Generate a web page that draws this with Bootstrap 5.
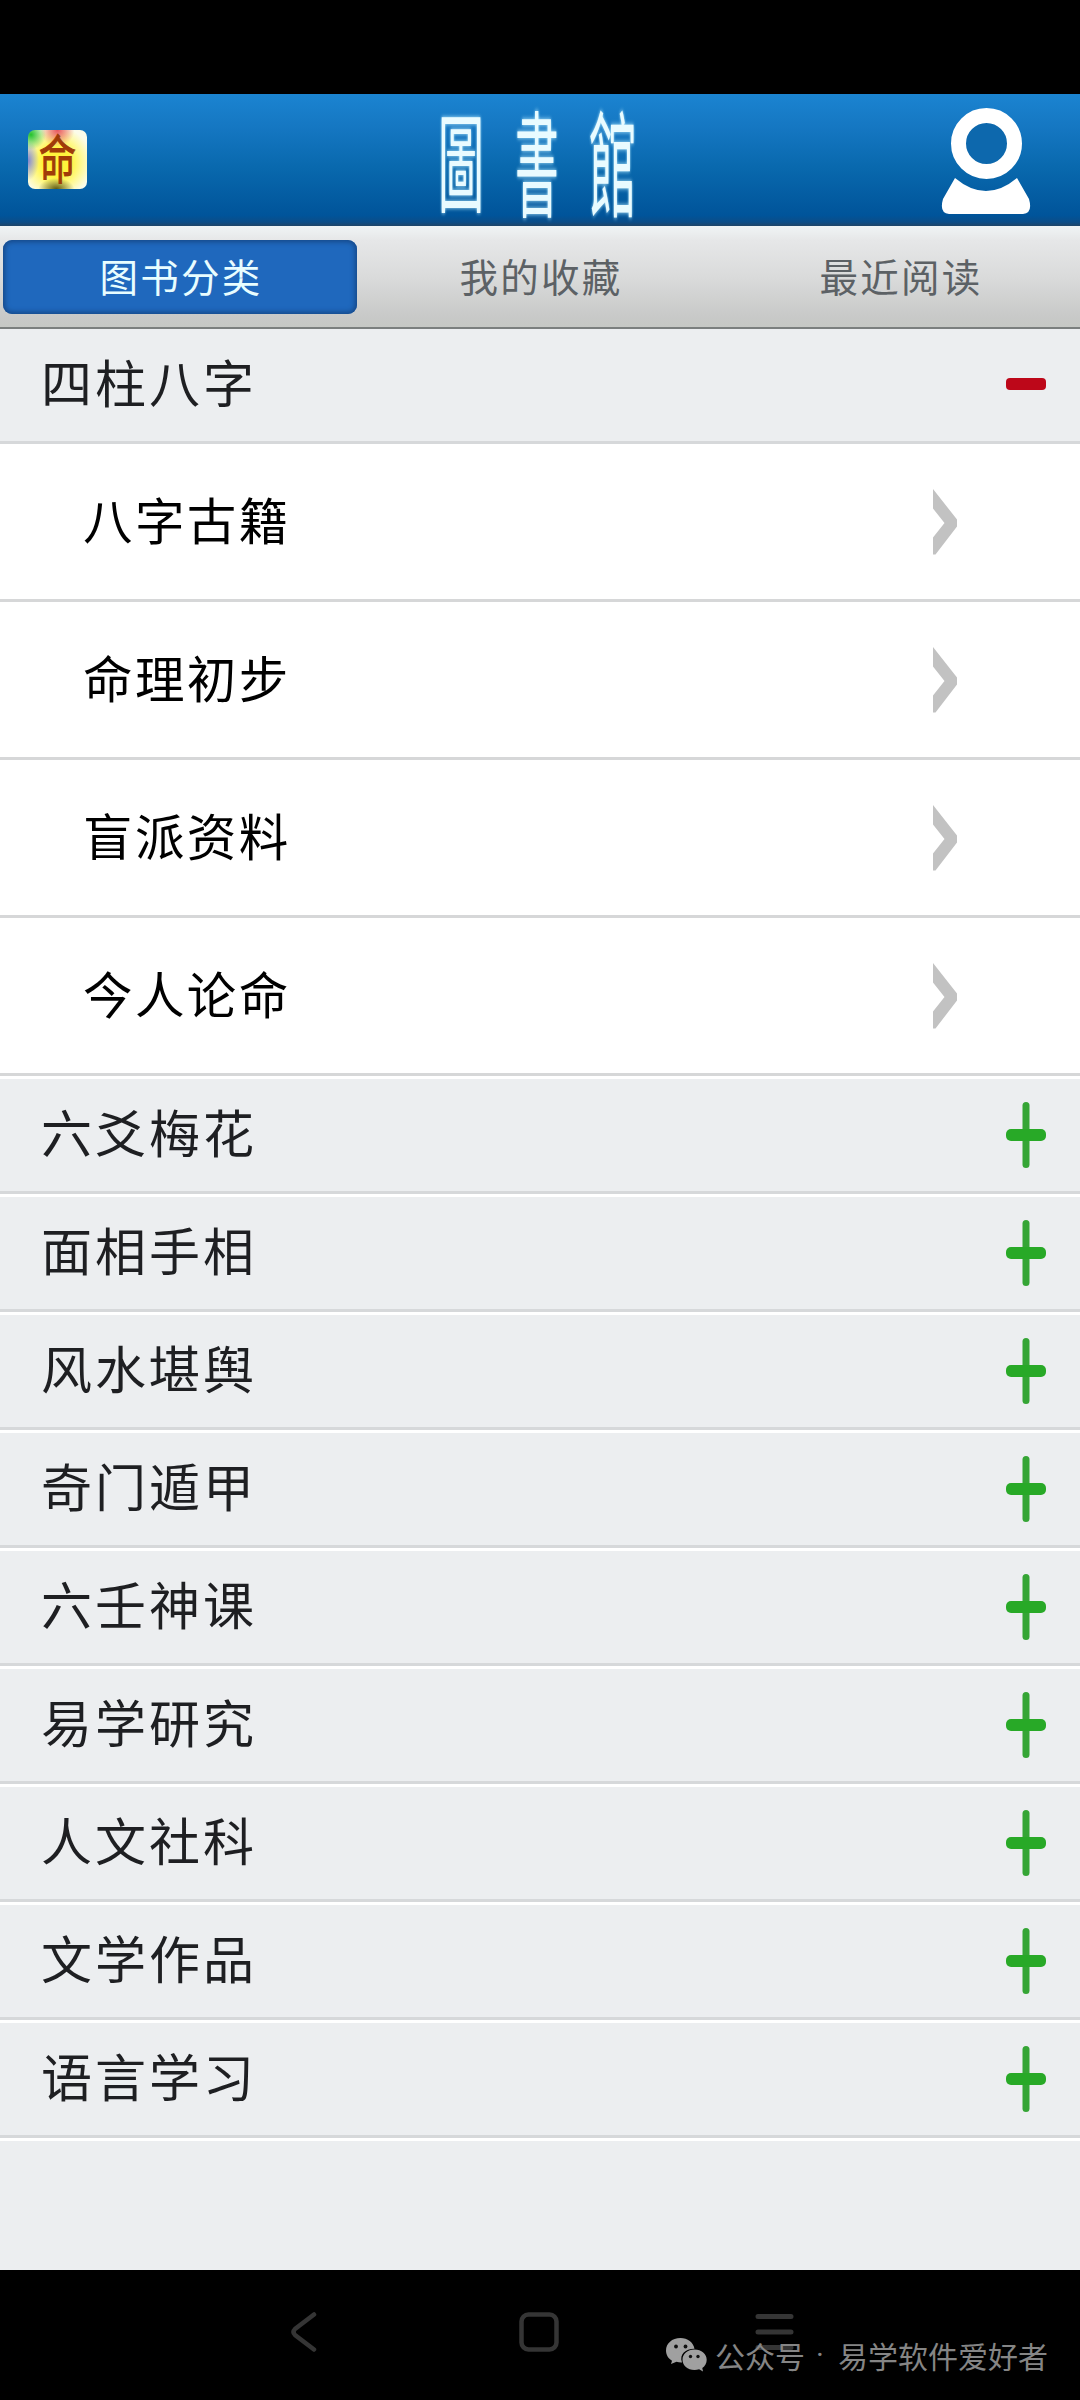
<!DOCTYPE html>
<html lang="zh-CN">
<head>
    <meta charset="UTF-8">
    <meta name="viewport" content="width=device-width, initial-scale=1.0">
    <title>圖書館</title>
    <link href="https://cdn.jsdelivr.net/npm/bootstrap@5.3.0/dist/css/bootstrap.min.css" rel="stylesheet">
    <style>
        body {
            font-family: "Noto Sans CJK SC", sans-serif;
            background: #eceef0;
            color: #1e1f22;
            line-height: 1;
            min-height: 2400px;
        }
        .status-bar {
            height: 94px;
            background: #000;
        }
        .top-bar {
            height: 132px;
            padding: 0 49px 0 28px;
            background: linear-gradient(#1b84d1 0%, #1577c2 25%, #0969ae 55%, #00549a 92%, #0b4d88 97%, #1f4568 100%);
        }
        .app-logo {
            width: 59px;
            height: 59px;
            margin-top: -1px;
            border-radius: 7px;
            overflow: visible;
            background:
                radial-gradient(circle at 5% 8%, #22c22a 0, transparent 15px),
                radial-gradient(circle at 50% 0%, #e85560 0, transparent 17px),
                radial-gradient(ellipse 11px 20px at 0% 52%, #7f86d0 0, transparent 100%),
                radial-gradient(ellipse 18px 11px at 48% 100%, #5f5a10 0, transparent 100%),
                radial-gradient(circle at 48% 55%, #fff43c 0 14px, #fff98a 24px, #fbfcea 36px);
        }
        .app-logo text {
            font-size: 37px;
            fill: #a03c08;
            stroke: #a03c08;
            stroke-width: .7px;
        }
        .brand-title {
            width: 220px;
            height: 132px;
            margin-left: 48px;
            overflow: visible;
        }
        .brand-title text {
            font-family: "Noto Sans CJK TC", sans-serif;
            font-size: 46px;
            fill: #e9fbff;
            filter: drop-shadow(0 0 1px #b9ecff);
        }
        .tab-strip {
            height: 103px;
            padding: 14px 3px 15px;
            background: linear-gradient(#f0f4f5 0%, #e6e7e8 14%, #dadbdb 50%, #c8c9c8 90%, #c6c8c4 100%);
            border-bottom: 2px solid #7b7f7e;
        }
        .tab-strip .nav-link {
            width: 354px;
            height: 74px;
            padding: 0 0 4px 2px;
            font-size: 38.5px;
            letter-spacing: 2.3px;
            color: #5c6165;
            border-radius: 9px;
        }
        .tab-strip .nav-link.active {
            color: #e8fdff;
            background: #1f68bd;
            box-shadow: inset 0 0 5px 2px #164888;
        }
        .group-row {
            height: 118px;
            padding: 0 34px 4px 41px;
            font-size: 51px;
            letter-spacing: 3px;
            border-top: 3px solid #fff;
            box-shadow: inset 0 -3px 0 #d6d8da;
        }
        .group-row.open {
            height: 115px;
            border-top: 0;
            padding-bottom: 5px;
        }
        .group-row span {
            margin-top: -6px;
        }
        .sub-row {
            height: 158px;
            padding: 0 122px 0 83px;
            font-size: 49.5px;
            letter-spacing: 2.4px;
            color: #000;
            background: #fff;
            border-bottom: 3px solid #d6d7d8;
        }
        .sub-row span {
            margin-top: -5px;
        }
        .sub-row svg {
            margin-top: 1px;
        }
        .list-area {
            height: 1941px;
        }
        .nav-keys {
            height: 130px;
            background: #000;
            padding: 42px 286px 0 291px;
        }
        .home-key {
            margin-left: 5px;
        }
        .watermark {
            right: 32px;
            bottom: 28px;
            font-size: 30px;
            color: #858585;
        }
        .watermark .dot {
            width: 33px;
            padding-right: 3px;
            font-family: Roboto, sans-serif;
        }
    </style>
</head>
<body>
<svg class="d-none">
    <symbol id="plus" viewBox="0 0 40 66">
        <rect x="16.5" y="0" width="7" height="66" rx="3.5" fill="#35a535"/>
        <rect x="0" y="27" width="40" height="12" rx="5" fill="#28a927"/>
    </symbol>
    <symbol id="minus" viewBox="0 0 40 12">
        <rect width="40" height="12" rx="4" fill="#bd0719"/>
    </symbol>
    <symbol id="chevron" viewBox="0 0 25 66">
        <path d="M0 0 24 30.500V37.500L2.500 65.500H0V48.500L11.500 34 0 19.500Z" fill="#c2c2c2"/>
    </symbol>
</svg>

<div class="status-bar"></div>

<header class="top-bar d-flex align-items-center justify-content-between">
    <svg class="app-logo" viewBox="0 0 59 59">
        <text transform="translate(11 49) scale(1 1.400)">命</text>
    </svg>
    <svg class="brand-title" viewBox="0 0 220 132">
        <text transform="translate(10 110) scale(1 2.350)">圖</text>
        <text transform="translate(87 114) scale(.95 2.500)">書</text>
        <text transform="translate(161 114) scale(1.040 2.500)">館</text>
    </svg>
    <svg width="90" height="108" viewBox="0 0 90 108">
        <circle cx="45.500" cy="37.500" r="28" fill="#0d68ad" stroke="#fff" stroke-width="15"/>
        <path d="M14 72Q45 98 76 72L88 93Q92 107 82 108H8Q-2 107 2 93Z" fill="#fff"/>
    </svg>
</header>

<ul class="tab-strip nav nav-pills flex-nowrap justify-content-between">
    <li class="nav-item"><a href="#" class="nav-link active d-flex align-items-center justify-content-center">图书分类</a></li>
    <li class="nav-item"><a href="#" class="nav-link d-flex align-items-center justify-content-center">我的收藏</a></li>
    <li class="nav-item"><a href="#" class="nav-link d-flex align-items-center justify-content-center">最近阅读</a></li>
</ul>

<main class="list-area">
    <div class="group-row open d-flex align-items-center justify-content-between"><span>四柱八字</span><svg width="40" height="12"><use href="#minus"/></svg></div>
    <div class="sub-row d-flex align-items-center justify-content-between"><span>八字古籍</span><svg width="25" height="66"><use href="#chevron"/></svg></div>
    <div class="sub-row d-flex align-items-center justify-content-between"><span>命理初步</span><svg width="25" height="66"><use href="#chevron"/></svg></div>
    <div class="sub-row d-flex align-items-center justify-content-between"><span>盲派资料</span><svg width="25" height="66"><use href="#chevron"/></svg></div>
    <div class="sub-row d-flex align-items-center justify-content-between"><span>今人论命</span><svg width="25" height="66"><use href="#chevron"/></svg></div>
    <div class="group-row d-flex align-items-center justify-content-between"><span>六爻梅花</span><svg width="40" height="66"><use href="#plus"/></svg></div>
    <div class="group-row d-flex align-items-center justify-content-between"><span>面相手相</span><svg width="40" height="66"><use href="#plus"/></svg></div>
    <div class="group-row d-flex align-items-center justify-content-between"><span>风水堪舆</span><svg width="40" height="66"><use href="#plus"/></svg></div>
    <div class="group-row d-flex align-items-center justify-content-between"><span>奇门遁甲</span><svg width="40" height="66"><use href="#plus"/></svg></div>
    <div class="group-row d-flex align-items-center justify-content-between"><span>六壬神课</span><svg width="40" height="66"><use href="#plus"/></svg></div>
    <div class="group-row d-flex align-items-center justify-content-between"><span>易学研究</span><svg width="40" height="66"><use href="#plus"/></svg></div>
    <div class="group-row d-flex align-items-center justify-content-between"><span>人文社科</span><svg width="40" height="66"><use href="#plus"/></svg></div>
    <div class="group-row d-flex align-items-center justify-content-between"><span>文学作品</span><svg width="40" height="66"><use href="#plus"/></svg></div>
    <div class="group-row d-flex align-items-center justify-content-between"><span>语言学习</span><svg width="40" height="66"><use href="#plus"/></svg></div>
    <div class="border-top border-3 border-white"></div>
</main>

<footer class="nav-keys position-relative">
    <div class="d-flex justify-content-between">
        <svg width="26" height="40" viewBox="0 0 26 40" fill="none" stroke="#353535" stroke-width="4.500" stroke-linecap="round"><path d="M23 2.500 4 17Q1 20 4 23L23 37.500"/></svg>
        <svg class="home-key" width="40" height="40" viewBox="0 0 40 40" fill="none" stroke="#353535" stroke-width="4.500"><rect x="2.500" y="2.500" width="35" height="35" rx="7"/></svg>
        <svg width="39" height="40" viewBox="0 0 39 40" fill="none" stroke="#353535" stroke-width="5" stroke-linecap="round"><path d="M3 4.500H36M3 20H36M3 35.500H36"/></svg>
    </div>
    <div class="watermark position-absolute d-flex align-items-center text-nowrap">
        <svg class="me-2" width="41" height="34" viewBox="0 0 41 34">
            <path d="M14.500 0C6 0 0 5.500 0 12.500c0 4.300 2.300 8 6 10.200L5 26l5.500-2.200q2.500.7 5.500.6C13 16 20 10.500 28.500 10.700 27.500 4.500 21.500 0 14.500 0Z" fill="#a0a0a0"/>
            <path d="M28.500 11.500c-7 0-12 4.500-12 10.200s5 10.300 12 10.300q2.500 0 4.600-.7L37 33.500 36.300 30c2.700-1.900 4.400-4.900 4.400-8.300 0-5.700-5.200-10.200-12.200-10.200Z" fill="#a0a0a0"/>
            <g fill="#111"><circle cx="10" cy="8.500" r="1.900"/><circle cx="19.500" cy="8.500" r="1.900"/><circle cx="24.500" cy="18.500" r="1.700"/><circle cx="32" cy="18.500" r="1.700"/></g>
        </svg>
        <span>公众号</span><span class="dot text-center">·</span><span>易学软件爱好者</span>
    </div>
</footer>
<script src="https://cdn.jsdelivr.net/npm/bootstrap@5.3.0/dist/js/bootstrap.bundle.min.js"></script>
</body>
</html>
